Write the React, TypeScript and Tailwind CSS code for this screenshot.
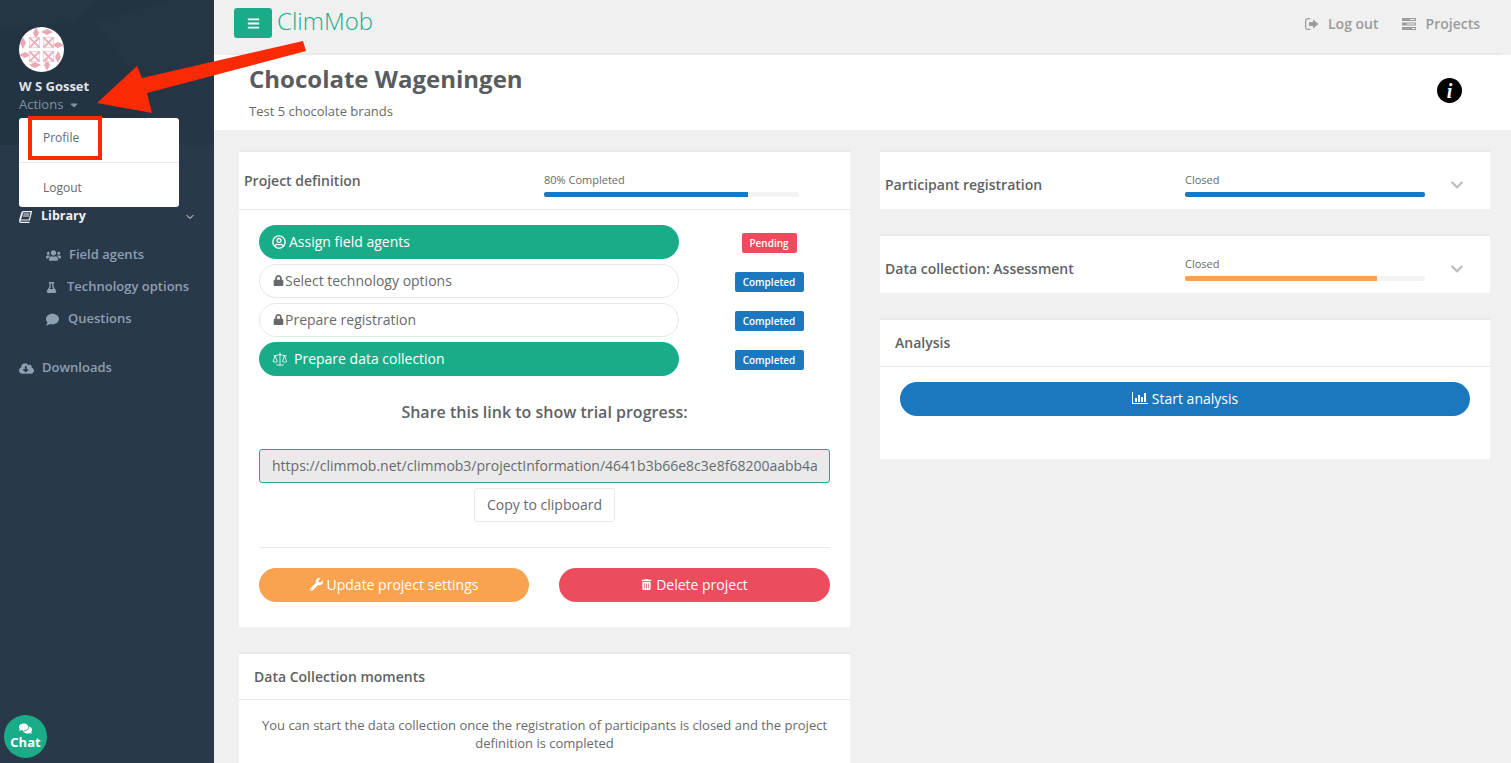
import { FaBars, FaCaretDown, FaChevronDown, FaCloudDownloadAlt, FaComment, FaComments, FaFlask, FaLock, FaRegUserCircle, FaTrashAlt, FaUsers, FaWrench } from "react-icons/fa"
import { FiChevronDown } from "react-icons/fi"
import { Scale } from "lucide-react"
import type { ReactNode } from "react"

function SignOutIcon() {
  return (
    <svg viewBox="0 0 14 12" className="h-3 w-[14px]" fill="currentColor">
      <path d="M3 0h2.5v1.2H3C2 1.2 1.3 2 1.3 3v6c0 1 .7 1.8 1.7 1.8h2.5V12H3C1.3 12 0 10.700 0 9V3C0 1.300 1.300 0 3 0z" />
      <path d="M8 1.500 13.500 6 8 10.500V8H4V4h4z" />
    </svg>
  )
}

function ProjectsIcon() {
  return (
    <svg viewBox="0 0 14 12" className="h-3 w-[14px]" fill="currentColor">
      <path d="M0 0h14v3H0zM0 4.500h14v3H0zM0 9h14v3H0z" />
      <path d="M8 1h5v1H8zM5 5.500h8v1H5zM10 10h3v1h-3z" fill="#f0f0f0" />
    </svg>
  )
}

function BookIcon() {
  return (
    <svg viewBox="0 0 13 12" className="h-3 w-[13px]" fill="none" stroke="currentColor">
      <path d="M3.500.7h9l-2.200 8.300H1.800C.8 9 .5 10 .7 10.500c.2.600.8.900 1.500.9h8.300" strokeWidth="1.200" />
      <path d="M3.500.7 1 9" strokeWidth="1.800" />
      <path d="M4.500 3h6M4 5h6" strokeWidth="1" />
    </svg>
  )
}

function ChartIcon() {
  return (
    <svg viewBox="0 0 16 12" className="h-3 w-4" fill="currentColor">
      <path d="M0 0h1v11h15v1H0z" />
      <path d="M3 6h2v4H3zM6 3h2v7H6zM9 5h2v5H9zM12 1h2v9h-2z" />
    </svg>
  )
}

const lenses = [
  "M17 0 20 6 17 12 14 6z",
  "M22 5 28 2 34 5 28 8z",
  "M33 18 39 15 45 18 39 21z",
  "M39 24 42 30 39 36 36 30z",
  "M28 32 31 38 28 44 25 38z",
  "M10 38 16 35 22 38 16 41z",
  "M0 28 6 25 12 28 6 31z",
  "M4 10 7 16 4 22 1 16z",
]

const cells = [
  [15.500, 15.500],
  [29.500, 15.500],
  [15.500, 29.500],
  [29.500, 29.500],
]

function Avatar() {
  return (
    <svg viewBox="0 0 45 45" className="h-[45px] w-[45px] rounded-full bg-white">
      <g fill="#e8a9b5">
        {lenses.map((d) => (
          <path key={d} d={d} />
        ))}
      </g>
      <g fill="none">
        {cells.map(([x, y]) => (
          <g key={`${x}-${y}`}>
            <rect x={x - 5} y={y - 5} width="10" height="10" stroke="#f4d5db" strokeWidth="1.200" />
            <path d={`M${x - 5} ${y - 5}L${x + 5} ${y + 5}M${x + 5} ${y - 5}L${x - 5} ${y + 5}`} stroke="#eab0bb" strokeWidth="1.800" />
          </g>
        ))}
      </g>
    </svg>
  )
}

function SubItem({ icon, label, gap }: { icon: ReactNode; label: string; gap: string }) {
  return (
    <div className={`flex h-8 items-center pl-[46px] text-[13px] font-semibold text-[#8c9fb3] ${gap}`}>
      {icon}
      <span>{label}</span>
    </div>
  )
}

function Sidebar() {
  return (
    <aside className="relative h-[763px] w-[214px] shrink-0 bg-[#2a394a]">
      <div className="relative h-[145px] overflow-hidden bg-[#243342] pl-[19px] pt-[27px]">
        <svg viewBox="0 0 214 145" className="absolute inset-0 h-full w-full">
          <path d="M0 0h95l-20 22-75 8z" fill="#263544" />
          <path d="M95 22 170 0h44v70l-60 30z" fill="#263544" />
          <path d="M150 100 214 70v75h-90z" fill="#273646" />
        </svg>
        <div className="relative">
          <Avatar />
          <div className="mt-[5px] text-[13px] font-bold leading-[18px] text-[#dfe4ed]">W S Gosset</div>
          <div className="flex items-center gap-[5px] text-[13px] leading-[18px] text-[#7e92a6]">
            Actions <FaCaretDown className="mt-[2px] text-[12px]" />
          </div>
        </div>
      </div>
      <nav className="pt-[58px]">
        <div className="flex h-[27px] items-center justify-between pl-[19px] pr-[18px] text-[12.5px] font-bold text-[#f0f2f5]">
          <span className="flex items-center gap-[9px]">
            <BookIcon />
            Library
          </span>
          <FiChevronDown className="text-[12px]" />
        </div>
        <div className="pt-[9px]">
          <SubItem icon={<FaUsers className="text-[15px]" />} label="Field agents" gap="gap-[8px]" />
          <SubItem icon={<FaFlask className="text-[11px]" />} label="Technology options" gap="gap-[10px]" />
          <SubItem icon={<FaComment className="text-[13px]" />} label="Questions" gap="gap-[9px]" />
        </div>
        <div className="mt-[17px] flex h-8 items-center gap-[8px] pl-[19px] text-[13px] font-semibold text-[#8c9fb3]">
          <FaCloudDownloadAlt className="text-[15px]" />
          Downloads
        </div>
      </nav>

      <div className="absolute left-[19px] top-[118px] z-10 h-[89px] w-[160px] rounded-[3px] bg-white text-[12px] text-[#676a6c]">
        <div className="flex h-[44px] items-center pb-[5px] pl-[24px]">Profile</div>
        <div className="border-t border-[#e7eaec] pl-[24px] pt-[16px] leading-[18px]">Logout</div>
      </div>
      <div className="absolute left-[28px] top-[116px] z-20 h-[44px] w-[74px] border-[4px] border-[#fb2a05]" />

      <div className="absolute left-[4px] top-[715px] flex h-[43px] w-[43px] flex-col items-center justify-center rounded-full bg-[#1aac89] pb-[2px] text-white">
        <FaComments className="text-[13px]" />
        <span className="text-[13px] font-bold leading-[15px]">Chat</span>
      </div>
    </aside>
  )
}

function Card({ children, className }: { children: ReactNode; className?: string }) {
  return <section className={`border-t-2 border-[#e7eaec] bg-white ${className ?? ""}`}>{children}</section>
}

function Bar({ label, percent, color }: { label: string; percent: string; color: string }) {
  return (
    <div>
      <div className="text-[11px] leading-[15px] text-[#676a6c]">{label}</div>
      <div className="mt-[5px] h-[5px] overflow-hidden rounded-[2px] bg-[#f3f3f3]">
        <div className={`h-full ${percent} ${color}`} />
      </div>
    </div>
  )
}

function Step({ icon, label, active, badge }: { icon: ReactNode; label: string; active?: boolean; badge: string }) {
  const pill = active ? "gap-[3px] bg-[#1aac89] pl-[13px] text-white" : "gap-[1px] border border-[#e7e7e7] bg-white pl-[13px] text-[#676a6c]"
  const tag = badge === "Pending" ? "w-[55px] bg-[#ec4c5d]" : "w-[69px] bg-[#1b78bf]"
  return (
    <div className="flex h-[34px] w-[590px] items-center">
      <div className={`flex h-[34px] w-[420px] shrink-0 items-center rounded-full pb-[1px] text-[14px] ${pill}`}>
        {icon}
        <span>{label}</span>
      </div>
      <div className="flex w-[180px] shrink-0 justify-center">
        <span className={`mt-[2px] flex h-5 items-center justify-center rounded-[2px] text-[10px] font-semibold text-white ${tag}`}>{badge}</span>
      </div>
    </div>
  )
}

function CollapsedCard({ title, children }: { title: string; children: ReactNode }) {
  return (
    <Card className="h-[59px]">
      <div className="flex h-[57px] items-center pl-[5px] pt-[8px]">
        <h5 className="w-[300px] text-[14px] font-semibold text-[#5f6265]">{title}</h5>
        <div className="w-[240px]">{children}</div>
        <FaChevronDown className="ml-[25px] text-[14px] text-[#bdbdbd]" />
      </div>
    </Card>
  )
}

export default function App() {
  return (
    <div className="relative flex h-[763px] w-[1511px] overflow-hidden bg-[#f0f0f0] font-['Open_Sans',sans-serif] text-[#676a6c]">
      <Sidebar />
      <main className="min-w-0 flex-1">
        <header className="ml-[15px] mr-[11px] flex h-[55px] items-start justify-between border-b-2 border-[#e7eaec]">
          <div className="flex items-start pl-[5px] pt-2">
            <button className="flex h-[30px] w-[38px] items-center justify-center rounded-[3px] bg-[#1aac89] text-white">
              <FaBars className="text-[13px]" />
            </button>
            <span className="ml-[5px] mt-[-2px] text-[24px] font-light leading-[30px] text-[#1aac89]">ClimMob</span>
          </div>
          <div className="flex items-center pr-[20px] pt-[15px] text-[14px] font-semibold leading-[18px] text-[#999c9e]">
            <span className="mr-[9px]"><SignOutIcon /></span>
            Log out
            <span className="ml-[23px] mr-[10px]"><ProjectsIcon /></span>
            Projects
          </div>
        </header>

        <div className="flex h-[75px] items-start justify-between bg-white pl-[35px] pr-[49px]">
          <div>
            <h2 className="pt-[6px] text-[24px] font-bold leading-[36px] text-[#595c5f]">Chocolate Wageningen</h2>
            <p className="mt-[5px] text-[13px] leading-[18px]">Test 5 chocolate brands</p>
          </div>
          <div className="mt-[23px] flex h-[25px] w-[25px] items-center justify-center rounded-full bg-black font-['Liberation_Serif',serif] text-[20px] font-bold italic leading-none text-white">
            i
          </div>
        </div>

        <div className="flex gap-[30px] pl-[25px] pt-[20px]">
          <div className="w-[611px] shrink-0">
            <Card>
              <div className="flex h-[58px] items-center border-b border-[#e7eaec] pl-[5px]">
                <h5 className="w-[300px] text-[14px] font-semibold text-[#5f6265]">Project definition</h5>
                <div className="mt-[8px] w-[255px]">
                  <Bar label="80% Completed" percent="w-[80%]" color="bg-[#1b78bf]" />
                </div>
              </div>
              <div className="h-[417px] px-[20px] pt-[15px]">
                <div className="flex flex-col gap-[5px]">
                  <Step active icon={<FaRegUserCircle className="text-[14px]" />} label="Assign field agents" badge="Pending" />
                  <Step icon={<FaLock className="text-[11px]" />} label="Select technology options" badge="Completed" />
                  <Step icon={<FaLock className="text-[11px]" />} label="Prepare registration" badge="Completed" />
                  <Step active icon={<Scale className="mr-[3px] h-4 w-4" strokeWidth={1.25} />} label="Prepare data collection" badge="Completed" />
                </div>
                <h3 className="mt-[25px] text-center text-[16px] font-semibold leading-[22px] text-[#5f6265]">Share this link to show trial progress:</h3>
                <input
                  readOnly
                  value="https://climmob.net/climmob3/projectInformation/4641b3b66e8c3e8f68200aabb4a"
                  className="mt-[26px] h-[34px] w-full rounded-[3px] border border-[#1aac89] bg-[#eaeaea] px-3 pb-[2px] text-[14px] text-[#676a6c] outline-none"
                />
                <div className="mt-[5px] flex justify-center">
                  <button className="h-[34px] w-[141px] rounded-[3px] border border-[#e7eaec] bg-white pb-[2px] text-[14px]">Copy to clipboard</button>
                </div>
                <div className="mt-[25px] border-t border-[#e7eaec]" />
                <div className="mt-5 flex justify-between text-[14px] text-white">
                  <button className="flex h-[34px] w-[270px] items-center justify-center gap-[4px] rounded-full bg-[#f9a24f] pb-[2px]">
                    <FaWrench className="text-[13px]" /> Update project settings
                  </button>
                  <button className="flex h-[34px] w-[271px] items-center justify-center gap-[4px] rounded-full bg-[#ec4c5d] pb-[2px]">
                    <FaTrashAlt className="text-[11px]" /> Delete project
                  </button>
                </div>
              </div>
            </Card>

            <Card className="mt-[25px] h-[200px]">
              <div className="flex h-[46px] items-center border-b border-[#e7eaec] pl-[15px]">
                <h5 className="text-[14px] font-semibold text-[#5f6265]">Data Collection moments</h5>
              </div>
              <p className="px-[20px] pt-[16px] text-center text-[13px] leading-[18px]">
                You can start the data collection once the registration of participants is closed and the project definition is completed
              </p>
            </Card>
          </div>

          <div className="flex w-[610px] shrink-0 flex-col gap-[25px]">
            <CollapsedCard title="Participant registration">
              <Bar label="Closed" percent="w-full" color="bg-[#1b78bf]" />
            </CollapsedCard>
            <CollapsedCard title="Data collection: Assessment">
              <Bar label="Closed" percent="w-[80%]" color="bg-[#f9a24f]" />
            </CollapsedCard>
            <Card className="h-[141px]">
              <div className="flex h-[47px] items-center border-b border-[#e7eaec] pb-[2px] pl-[15px]">
                <h5 className="text-[14px] font-semibold text-[#5f6265]">Analysis</h5>
              </div>
              <div className="px-[20px] pt-[15px]">
                <button className="flex h-[34px] w-full items-center justify-center gap-[4px] rounded-full bg-[#1b78bf] pb-[2px] text-[14px] text-white">
                  <ChartIcon /> Start analysis
                </button>
              </div>
            </Card>
          </div>
        </div>
      </main>

      <svg viewBox="0 0 1511 763" className="pointer-events-none absolute inset-0 z-30 h-[763px] w-[1511px]">
        <path d="M303 41 306 51 147 93 152 113 97 103 137 66 142 78z" fill="#fb2a05" />
      </svg>
    </div>
  )
}
